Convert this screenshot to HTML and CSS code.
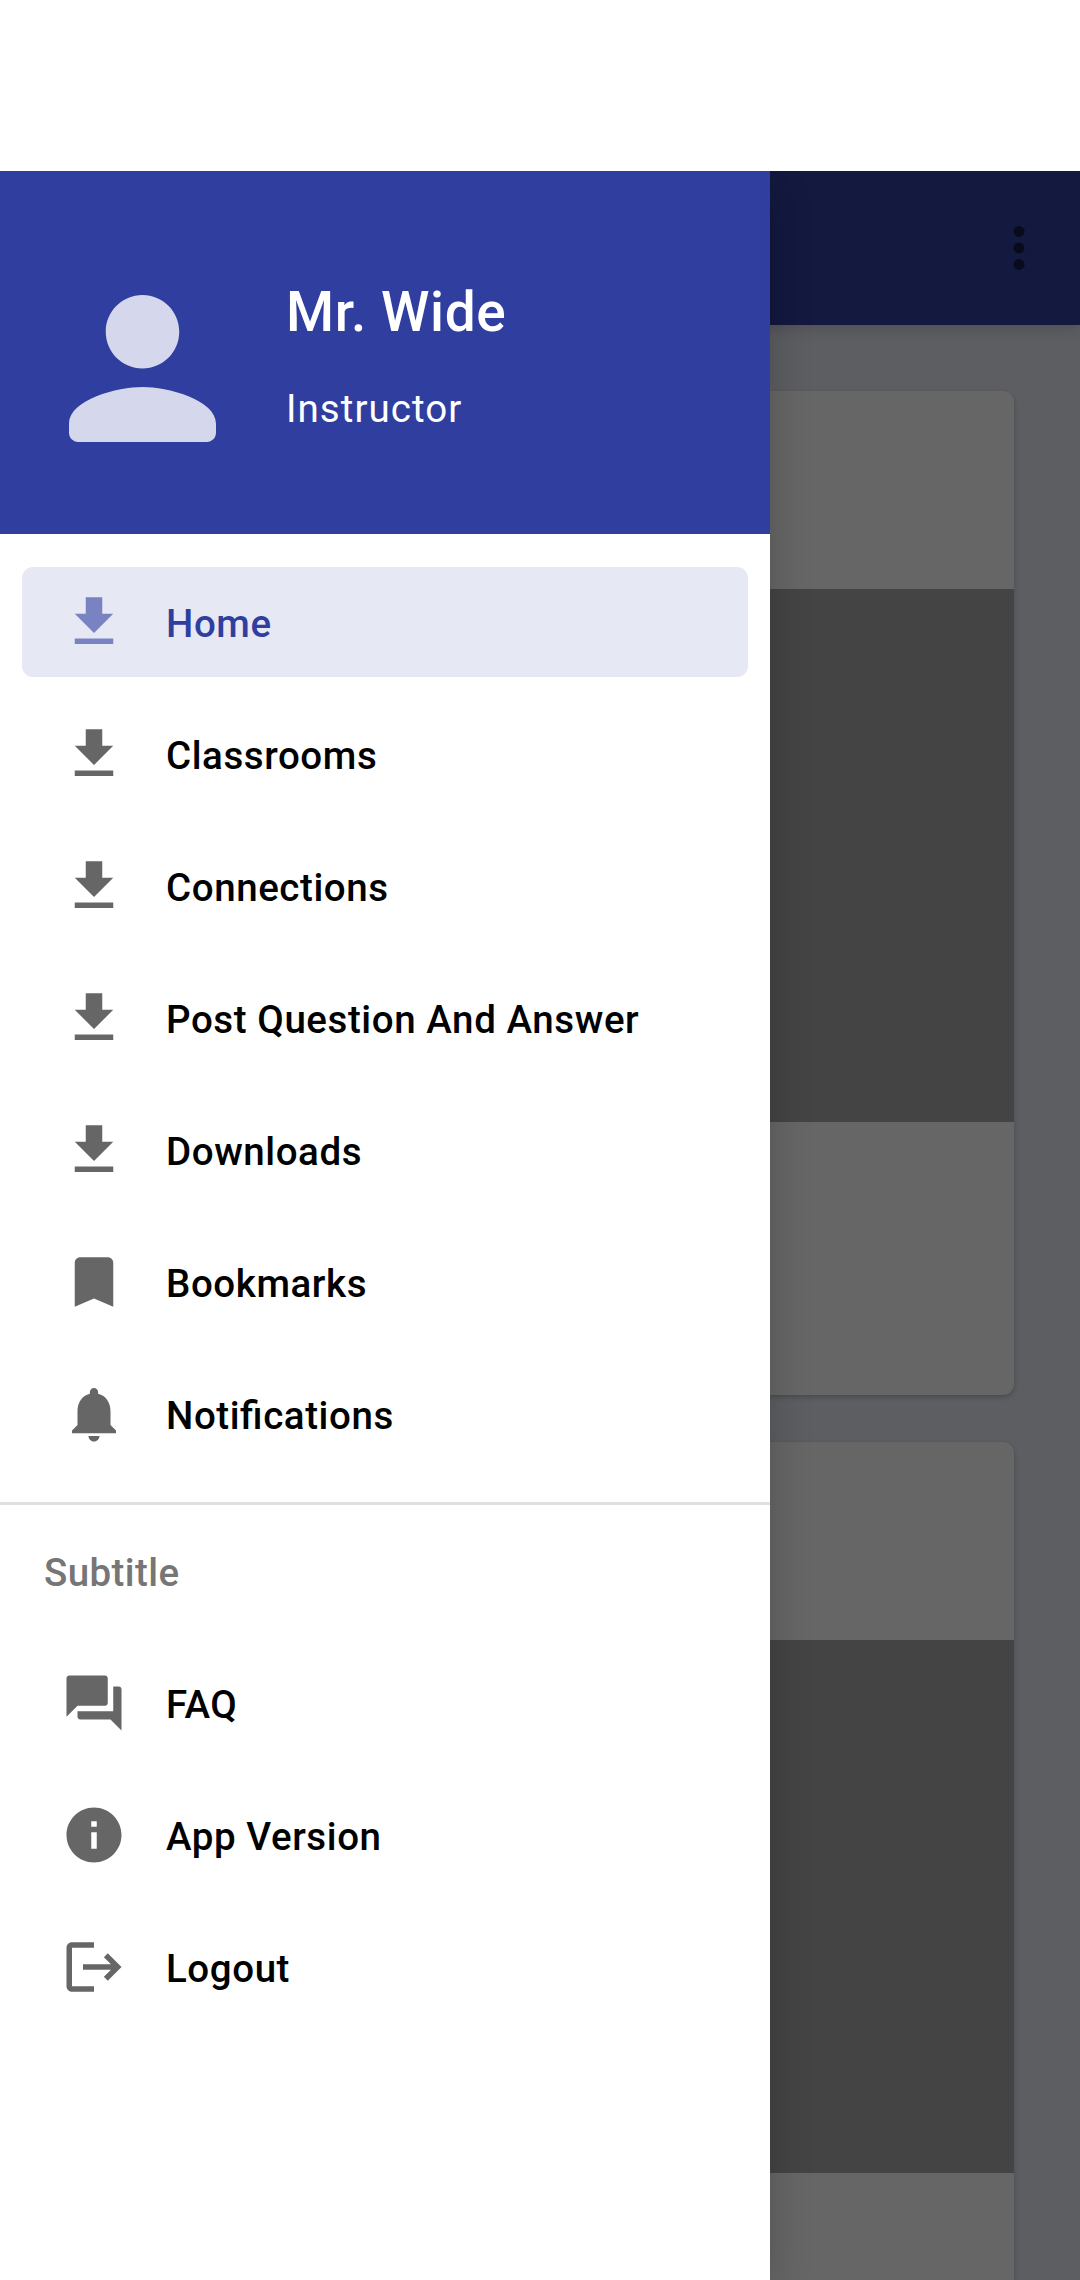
FILE: index.html
```html
<!DOCTYPE html>
<html lang="en">
<head>
<meta charset="utf-8">
<title>Home</title>
<link rel="stylesheet" href="styles.css">
</head>
<body>
<svg class="sprite" aria-hidden="true">
  <symbol id="download" viewBox="0 0 24 24"><path d="M19 9h-4V3H9v6H5l7 7 7-7zM5 18v2h14v-2H5z"/></symbol>
  <symbol id="bookmark" viewBox="0 0 24 24"><path d="M17 3H7c-1.1 0-2 .9-2 2v16l7-3 7 3V5c0-1.1-.9-2-2-2z"/></symbol>
  <symbol id="bell" viewBox="0 0 24 24"><path d="M12 22c1.1 0 2-.9 2-2h-4c0 1.1.89 2 2 2zm6-6v-5c0-3.07-1.64-5.64-4.5-6.32V4c0-.83-.67-1.5-1.5-1.5s-1.5.67-1.5 1.5v.68C7.63 5.36 6 7.92 6 11v5l-2 2v1h16v-1l-2-2z"/></symbol>
  <symbol id="forum" viewBox="0 0 24 24"><path d="M21 6h-2v9H6v2c0 .55.45 1 1 1h11l4 4V7c0-.55-.45-1-1-1zm-4 6V3c0-.55-.45-1-1-1H3c-.55 0-1 .45-1 1v14l4-4h10c.55 0 1-.45 1-1z"/></symbol>
  <symbol id="info" viewBox="0 0 24 24"><path d="M12 2C6.48 2 2 6.48 2 12s4.48 10 10 10 10-4.48 10-10S17.52 2 12 2zm1 15h-2v-6h2v6zm0-8h-2V7h2v2z"/></symbol>
  <symbol id="logout" viewBox="0 0 24 24"><path d="M17 7l-1.41 1.41L18.17 11H8v2h10.17l-2.58 2.58L17 17l5-5zM4 5h8V3H4c-1.1 0-2 .9-2 2v14c0 1.1.9 2 2 2h8v-2H4V5z"/></symbol>
</svg>
<div class="screen">
  <main class="app">
    <header class="appbar">
      <svg class="more" viewBox="0 0 24 24"><path d="M12 8c1.1 0 2-.9 2-2s-.9-2-2-2-2 .9-2 2 .9 2 2 2zm0 2c-1.1 0-2 .9-2 2s.9 2 2 2 2-.9 2-2-.9-2-2-2zm0 6c-1.1 0-2 .9-2 2s.9 2 2 2 2-.9 2-2-.9-2-2-2z"/></svg>
    </header>
    <div class="feed">
      <article class="card"><div class="media"></div></article>
      <article class="card"><div class="media"></div></article>
    </div>
  </main>
  <div class="scrim"></div>
  <aside class="drawer">
    <header class="profile">
      <svg class="avatar" viewBox="4 4 16 16"><path d="M12 12c2.210 0 4-1.790 4-4s-1.790-4-4-4-4 1.790-4 4 1.790 4 4 4zm0 2c-2.670 0-8 1.340-8 4v1c0 .55.45 1 1 1h14c.55 0 1-.45 1-1v-1c0-2.660-5.330-4-8-4z"/></svg>
      <div class="who">
        <div class="name">Mr. Wide</div>
        <div class="role">Instructor</div>
      </div>
    </header>
    <nav class="menu">
      <a class="item active"><svg><use href="#download"/></svg><span>Home</span></a>
      <a class="item"><svg><use href="#download"/></svg><span>Classrooms</span></a>
      <a class="item"><svg><use href="#download"/></svg><span>Connections</span></a>
      <a class="item"><svg><use href="#download"/></svg><span>Post Question And Answer</span></a>
      <a class="item"><svg><use href="#download"/></svg><span>Downloads</span></a>
      <a class="item"><svg><use href="#bookmark"/></svg><span>Bookmarks</span></a>
      <a class="item"><svg><use href="#bell"/></svg><span>Notifications</span></a>
    </nav>
    <div class="subtitle">Subtitle</div>
    <nav class="menu secondary">
      <a class="item"><svg><use href="#forum"/></svg><span>FAQ</span></a>
      <a class="item"><svg><use href="#info"/></svg><span>App Version</span></a>
      <a class="item"><svg><use href="#logout"/></svg><span>Logout</span></a>
    </nav>
  </aside>
</div>
</body>
</html>
```
FILE: styles.css
```css
* { box-sizing: border-box; }

body {
  margin: 0;
  padding-top: 171px;
  height: 2280px;
  overflow: hidden;
  background: #fff;
  font-family: Roboto, "Noto Sans", sans-serif;
  font-feature-settings: "liga" 1;
}

.sprite { display: none; }

/* The app, the scrim and the drawer share one cell, stacked in order. */
.screen {
  display: grid;
  grid-template: 2109px / 1080px;
  overflow: hidden;
}

.app, .scrim, .drawer { grid-area: 1 / 1; }

.app { background: #e8eaf6; overflow: hidden; }

.appbar {
  display: flex;
  align-items: center;
  justify-content: flex-end;
  height: 154px;
  padding-right: 28px;
  background: #303f9f;
  box-shadow: 0 3px 14px rgba(0, 0, 0, .17);
}

.more { width: 66px; height: 66px; fill: rgba(0, 0, 0, .54); }

.feed {
  display: flex;
  flex-direction: column;
  gap: 47px;
  padding: 66px;
}

.card {
  flex: none;
  height: 1004px;
  padding-top: 198px;
  border-radius: 11px;
  background: #fff;
  box-shadow: 0 2px 5px rgba(0, 0, 0, .22);
}

.media { height: 533px; background: #aaa; }

.scrim { background: rgba(0, 0, 0, .6); }

.drawer {
  width: 770px;
  background: #fff;
  box-shadow: 0 12px 40px rgba(0, 0, 0, .2);
}

.profile {
  display: flex;
  height: 363px;
  padding: 105px 0 0 69px;
  background: #303f9f;
  color: #fff;
}

.avatar {
  width: 147px;
  height: 147px;
  margin-top: 19px;
  fill: rgba(255, 255, 255, .8);
}

.who { margin-left: 70px; white-space: nowrap; }

.name {
  font-size: 55px;
  line-height: 72px;
  font-weight: 500;
  letter-spacing: .6px;
}

.role {
  margin-top: 35px;
  font-size: 38.5px;
  line-height: 52px;
  letter-spacing: 1.05px;
}

.menu {
  display: flex;
  flex-direction: column;
  gap: 22px;
  padding: 33px 22px;
}

.item {
  display: flex;
  align-items: center;
  height: 110px;
  padding-left: 39px;
  border-radius: 11px;
  color: #000;
  font-size: 38.5px;
  font-weight: 500;
  letter-spacing: .58px;
  white-space: nowrap;
}

.item svg { width: 66px; height: 66px; margin-right: 39px; fill: #666; }
.item span { padding-top: 2px; }

.active { background: #e6e8f4; color: #303f9f; }
.active svg { fill: #7983c1; }

.subtitle {
  height: 113px;
  padding: 43px 0 0 44px;
  border-top: 3px solid #e0e0e0;
  color: #767676;
  font-size: 38.5px;
  line-height: 50px;
  font-weight: 500;
  letter-spacing: .4px;
}
```
